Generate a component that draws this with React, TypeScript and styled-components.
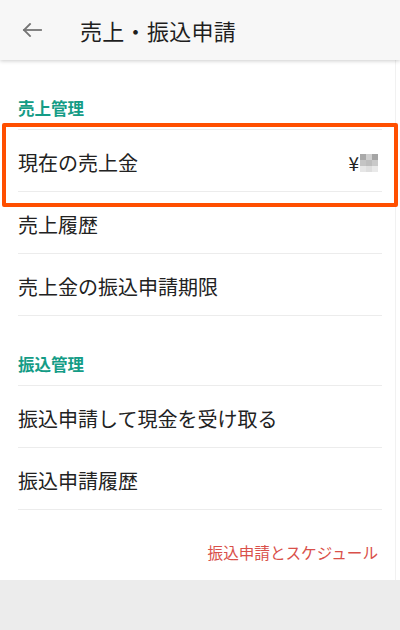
import React from "react";
import styled, { createGlobalStyle } from "styled-components";

const Global = createGlobalStyle`
  html, body { margin: 0; padding: 0; background: #ffffff; }
  body { font-family: "Noto Sans CJK JP", "Noto Sans", sans-serif; color: #222; }
  * { box-sizing: border-box; }
`;

const Page = styled.div`
  width: 400px;
  height: 630px;
  display: flex;
  flex-direction: column;
  overflow: hidden;
  background: #ececec;
`;

const Header = styled.header`
  height: 60px;
  flex: none;
  display: flex;
  align-items: center;
  background: #f7f7f7;
  box-shadow: 0 1px 4px rgba(0, 0, 0, 0.2);
  position: relative;
  z-index: 2;
`;

const BackButton = styled.button`
  width: 62px;
  height: 60px;
  border: none;
  background: transparent;
  padding: 0 0 0 22px;
  display: flex;
  align-items: center;
  color: #757575;
`;

const Title = styled.h1`
  margin: 0 0 0 18px;
  font-size: 22px;
  font-weight: 400;
  color: #1e1e1e;
  line-height: 1;
  letter-spacing: 0.3px;
`;

const Main = styled.main`
  height: 520px;
  flex: none;
  background: #fff;
  padding: 0 18px;
  box-shadow: inset -4px 0 0 #fff, inset -5px 0 0 #f1f1f1;
  display: flex;
  flex-direction: column;
`;

const SectionLabel = styled.div`
  padding: 38px 0 11px;
  font-size: 16.5px;
  line-height: 20px;
  font-weight: 700;
  color: #149c86;
`;

const List = styled.div`
  position: relative;
  border-top: 1px solid #ececec;
`;

const Row = styled.div`
  height: 62px;
  border-bottom: 1px solid #ececec;
  display: flex;
  align-items: center;
  justify-content: space-between;
  padding-top: 3px;
  font-size: 20px;
  color: #222;
`;

const Value = styled.span`
  display: flex;
  align-items: center;
  padding-right: 4px;
  font-size: 19px;
  color: #222;
`;

const Mosaic = styled.span`
  display: grid;
  grid-template-columns: repeat(3, 6px);
  grid-template-rows: repeat(3, 6px);
  margin-left: 1px;
  margin-top: 2px;
`;

const Cell = styled.span<{ $c: string }>`
  background: ${(p) => p.$c};
`;

const Highlight = styled.div`
  position: absolute;
  left: -16px;
  right: -16px;
  top: -7px;
  height: 84px;
  border: 4px solid #ff4f00;
  border-radius: 2px;
  pointer-events: none;
`;

const LinkArea = styled.div`
  padding: 32px 4px 18px 0;
  display: flex;
  justify-content: flex-end;
`;

const ScheduleLink = styled.a`
  font-size: 15.6px;
  line-height: 20px;
  color: #d9504a;
  text-decoration: none;
`;

const Footer = styled.div`
  flex: 1;
  background: #ececec;
`;

const mosaic = [
  "#a9a9a9", "#cfcfcf", "#a5a5a5",
  "#c4c4c4", "#bdbdbd", "#c9c9c9",
  "#e6e6e6", "#dedede", "#e9e9e9",
];

const BackArrow = () => (
  <svg width="20" height="14" viewBox="0 0 20 14" fill="none" stroke="currentColor" strokeWidth="1.8" strokeLinecap="square">
    <path d="M2 7H19" />
    <path d="M8 1L2 7L8 13" strokeLinejoin="miter" />
  </svg>
);

export default function App() {
  return (
    <>
      <Global />
      <Page>
        <Header>
          <BackButton aria-label="戻る">
            <BackArrow />
          </BackButton>
          <Title>売上・振込申請</Title>
        </Header>
        <Main>
          <SectionLabel>売上管理</SectionLabel>
          <List>
            <Highlight />
            <Row>
              <span>現在の売上金</span>
              <Value>
                ¥
                <Mosaic>
                  {mosaic.map((c, i) => (
                    <Cell key={i} $c={c} />
                  ))}
                </Mosaic>
              </Value>
            </Row>
            <Row>売上履歴</Row>
            <Row>売上金の振込申請期限</Row>
          </List>
          <SectionLabel>振込管理</SectionLabel>
          <List>
            <Row>振込申請して現金を受け取る</Row>
            <Row>振込申請履歴</Row>
          </List>
          <LinkArea>
            <ScheduleLink href="#">振込申請とスケジュール</ScheduleLink>
          </LinkArea>
        </Main>
        <Footer />
      </Page>
    </>
  );
}
